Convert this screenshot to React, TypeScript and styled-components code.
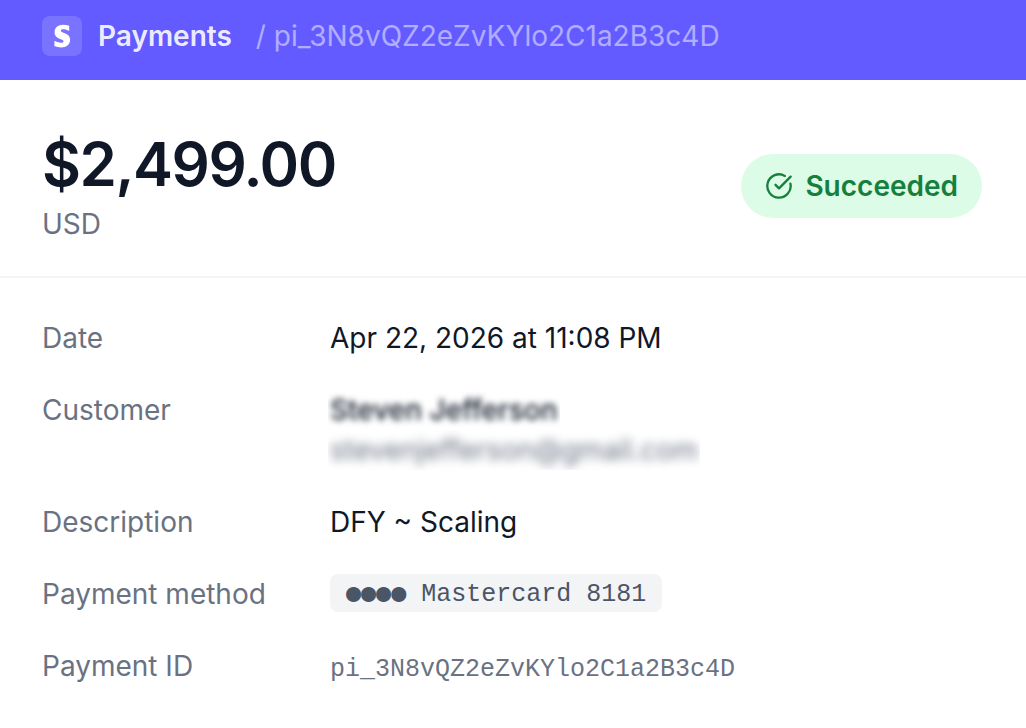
import React from "react";
import styled, { createGlobalStyle } from "styled-components";
import { CircleCheckBig } from "lucide-react";

const GlobalStyle = createGlobalStyle`
  *, *::before, *::after { box-sizing: border-box; }
  body {
    margin: 0;
    background: #ffffff;
    color: #101828;
    font-family: Inter, "Liberation Sans", sans-serif;
    font-size: 28px;
    line-height: 40px;
    -webkit-font-smoothing: antialiased;
  }
`;

const TopBar = styled.header`
  display: flex;
  align-items: center;
  gap: 16px;
  padding: 0 42px 8px;
  min-height: 80px;
  background: #635bff;
`;

const Logo = styled.span`
  display: flex;
  align-items: center;
  justify-content: center;
  width: 40px;
  height: 40px;
  border-radius: 8px;
  background: rgba(255, 255, 255, 0.15);
`;

const Breadcrumb = styled.nav`
  display: flex;
  align-items: center;
  gap: 24px;
  white-space: nowrap;
`;

const Section = styled.a`
  color: rgba(255, 255, 255, 0.9);
  font-weight: 600;
  text-decoration: none;
`;

const Crumb = styled.span`
  color: rgba(255, 255, 255, 0.5);
`;

const Summary = styled.section`
  display: flex;
  align-items: center;
  justify-content: space-between;
  padding: 48px 44px 32px 42px;
  border-bottom: 2px solid #f3f4f6;
`;

const Amount = styled.h1`
  margin: 0 0 4px;
  font-size: 60px;
  font-weight: 600;
  line-height: 72px;
  letter-spacing: -0.025em;
`;

const Currency = styled.p`
  margin: 0;
  color: #6a7282;
`;

const Status = styled.span`
  display: flex;
  align-items: center;
  gap: 12px;
  padding: 12px 24px;
  border-radius: 32px;
  background: #dcfce7;
  color: #15803d;
  font-weight: 600;
`;

const Details = styled.dl`
  display: grid;
  grid-template-columns: 256px 1fr;
  gap: 32px;
  margin: 0;
  padding: 40px 42px;
  border-bottom: 2px solid #f1f5f9;
`;

const Term = styled.dt`
  color: #6a7282;
`;

const Value = styled.dd`
  margin: 0;
  min-width: 0;
`;

const Redacted = styled.div<{ $strong?: boolean }>`
  width: fit-content;
  margin: 0 -2px;
  padding: 0 2px;
  overflow: hidden;
  color: ${(p) => (p.$strong ? "#101828" : "#6a7282")};
  font-weight: ${(p) => (p.$strong ? 500 : 400)};

  span {
    display: block;
    filter: blur(${(p) => (p.$strong ? 3 : 5)}px);
  }
`;

const Mono = styled.span`
  color: #6a7282;
  font-family: "Liberation Mono", monospace;
  font-size: 25px;
`;

const Card = styled(Mono)`
  display: flex;
  align-items: center;
  gap: 15px;
  width: fit-content;
  padding: 4px 16px 0;
  border-radius: 8px;
  background: #f3f4f6;
  color: #4a5565;
  line-height: 34px;
`;

const Dots = styled.span`
  font-family: "DejaVu Sans Mono", monospace;
  line-height: 30px;
  padding-bottom: 4px;
`;

export default function App() {
  return (
    <>
      <GlobalStyle />
      <TopBar>
        <Logo>
          <svg width="18" height="24" viewBox="0 0 18 24" aria-hidden="true">
            <path
              fill="#fff"
              d="M16.200 1.700v5.300C14.300 5.900 12.200 5.300 10.300 5.300c-1.500 0-2.400.5-2.400 1.400 0 1.100 1.400 1.500 3.200 2.200 3.100 1.100 6 2.600 6 6.900 0 4.900-3.700 7.700-9 7.700-2.300 0-4.700-.5-6.700-1.400v-5.300c1.900 1.100 4.400 1.900 6.600 1.900 1.600 0 2.500-.5 2.500-1.500 0-1.200-1.500-1.600-3.400-2.300-3-1.100-5.500-2.600-5.500-6.600C1.600 3.600 5.100.8 10.100.8c2.100 0 4.200.3 6.100.9Z"
            />
          </svg>
        </Logo>
        <Breadcrumb aria-label="Breadcrumb">
          <Section href="#payments">Payments</Section>
          <Crumb>/ pi_3N8vQZ2eZvKYlo2C1a2B3c4D</Crumb>
        </Breadcrumb>
      </TopBar>
      <main>
        <Summary>
          <div>
            <Amount>$2,499.00</Amount>
            <Currency>USD</Currency>
          </div>
          <Status>
            <CircleCheckBig size={28} strokeWidth={2} aria-hidden="true" />
            Succeeded
          </Status>
        </Summary>
        <Details>
          <Term>Date</Term>
          <Value>Apr 22, 2026 at 11:08 PM</Value>
          <Term>Customer</Term>
          <Value>
            <Redacted $strong>
              <span>Steven Jefferson</span>
            </Redacted>
            <Redacted>
              <span>stevenjefferson@gmail.com</span>
            </Redacted>
          </Value>
          <Term>Description</Term>
          <Value>DFY ~ Scaling</Value>
          <Term>Payment method</Term>
          <Value>
            <Card>
              <Dots>●●●●</Dots>
              <span>Mastercard 8181</span>
            </Card>
          </Value>
          <Term>Payment ID</Term>
          <Value>
            <Mono>pi_3N8vQZ2eZvKYlo2C1a2B3c4D</Mono>
          </Value>
        </Details>
      </main>
    </>
  );
}
